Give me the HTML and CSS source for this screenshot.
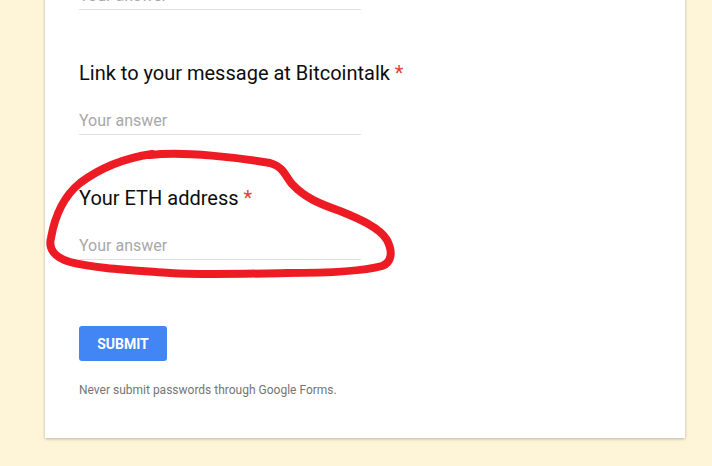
FILE: index.html
```
<!DOCTYPE html>
<html lang="en">
<head>
  <meta charset="UTF-8" />
  <meta name="viewport" content="width=device-width, initial-scale=1.0" />
  <title>Airdrop Form</title>
  <link rel="stylesheet" href="styles.css">
</head>
<body>
  <main class="form-wrap">
    <form class="form-card" onsubmit="return false;">
      <!-- Questions -->
      <div class="question">
        <label class="q-title">Your Bitcointalk username <span class="req">*</span></label>
        <input class="q-input" type="text" placeholder="Your answer" />
      </div>

      <div class="question">
        <label class="q-title">Link to your message at Bitcointalk <span class="req">*</span></label>
        <input class="q-input" type="text" placeholder="Your answer" />
      </div>

      <div class="question">
        <label class="q-title">Your ETH address <span class="req">*</span></label>
        <input class="q-input" type="text" placeholder="Your answer" />
      </div>

      <div class="form-footer">
        <button class="submit-btn" type="submit">SUBMIT</button>
        <p class="note">Never submit passwords through Google Forms.</p>
      </div>
    </form>
  </main>

  <!-- hand drawn marker circle -->
  <svg class="scribble" width="712" height="466" viewBox="0 0 712 466">
    <path d="M150,155 C185,151 240,158 270,163 C284,167 285,176 292,184 C305,198 320,204 340,211 C360,219 380,228 387,240 C393,252 392,262 382,266 C360,272 320,273 287,273 C240,274 200,275 170,273 C130,270 92,268 70,262 C55,258 48,249 51,238 C55,215 64,196 80,183 C100,168 125,158 152,154" />
  </svg>
</body>
</html>
```

FILE: styles.css
```
* {
  margin: 0;
  padding: 0;
  box-sizing: border-box;
}

body {
  font-family: Roboto, 'Liberation Sans', Arial, sans-serif;
  background: #fef5d9;
  min-height: 100vh;
  position: relative;
  overflow: hidden;
}

/* Form card */
.form-wrap {
  padding-left: 45px;
  margin-top: -88px;
}

.form-card {
  width: 640px;
  background: #fff;
  padding: 24px 34px 40px;
  box-shadow: 0 1px 3px rgba(0, 0, 0, 0.28);
}

.question {
  display: flex;
  flex-direction: column;
  margin-bottom: 51px;
}

.q-title {
  font-size: 20px;
  line-height: 24px;
  color: #0d0d0d;
  margin-bottom: 25px;
}

.req {
  color: #db4437;
}

.q-input {
  width: 282px;
  border: none;
  border-bottom: 1px solid #e0e0e0;
  padding: 0 0 4px;
  font-family: inherit;
  font-size: 16px;
  line-height: 20px;
  height: 25px;
  color: #202124;
  outline: none;
}

.q-input::placeholder {
  color: #a8a8a8;
}

/* Footer */
.form-footer {
  padding-top: 15px;
}

.submit-btn {
  width: 88px;
  height: 35px;
  background: #4285f4;
  color: #fff;
  border: none;
  border-radius: 3px;
  font-family: inherit;
  font-size: 14px;
  font-weight: bold;
  cursor: pointer;
}

.note {
  margin-top: 21px;
  font-size: 12px;
  line-height: 16px;
  color: #757575;
}

/* Marker scribble over the page */
.scribble {
  position: absolute;
  top: 0;
  left: 0;
  pointer-events: none;
}

.scribble path {
  fill: none;
  stroke: #ed1c24;
  stroke-width: 8;
  stroke-linecap: round;
  stroke-linejoin: round;
}
```
